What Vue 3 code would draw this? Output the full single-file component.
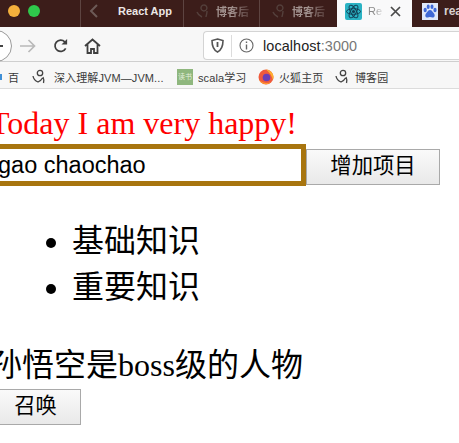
<script setup>
const tabs = [
  { id: 2, label: '博客后', cls: 'tab-blog' },
  { id: 3, label: '博客后', cls: 'tab-blog tab-blog2' }
]
const bookmarks = [
  { id: 1, label: '深入理解JVM—JVM...', icon: 'cnblog', labelGap: 8 },
  { id: 2, label: 'scala学习', icon: 'scala', labelGap: 5 },
  { id: 3, label: '火狐主页', icon: 'fox', labelGap: 5 },
  { id: 4, label: '博客园', icon: 'cnblog', labelGap: 6 }
]
const items = ['基础知识', '重要知识']
</script>

<template>
  <div class="shot">
    <header class="tabbar">
      <div class="lights">
        <span class="light yellow"></span>
        <span class="light green"></span>
      </div>
      <div class="tab tab-first">
        <svg class="chev" width="10" height="14" viewBox="0 0 10 14"><path d="M8 1 2 7l6 6" fill="none" stroke="#6d5a57" stroke-width="2"/></svg>
        <span class="tab-title strong">React App</span>
      </div>
      <div v-for="t in tabs" :key="t.id" class="tab" :class="t.cls">
        <svg class="blog-fav" width="14" height="14" viewBox="0 0 14 14"><path d="M1 8c1 3 3 4 5 5M8 1a3 3 0 1 1-.1 0M11 7c0 3-1 5-1 6" fill="none" stroke="#54403c" stroke-width="1.4"/></svg>
        <span class="tab-title fade">{{ t.label }}</span>
      </div>
      <div class="tab-active">
        <svg width="17" height="17" viewBox="0 0 17 17">
          <rect width="17" height="17" rx="2" fill="#2bb3c4"/>
          <g fill="none" stroke="#123f55" stroke-width="1">
            <ellipse cx="8.5" cy="8.5" rx="7" ry="2.8"/>
            <ellipse cx="8.5" cy="8.5" rx="7" ry="2.8" transform="rotate(60 8.5 8.5)"/>
            <ellipse cx="8.5" cy="8.5" rx="7" ry="2.8" transform="rotate(120 8.5 8.5)"/>
          </g>
          <circle cx="8.5" cy="8.5" r="1.6" fill="#123f55"/>
        </svg>
        <span class="active-title">Re</span>
        <svg class="close" width="11" height="11" viewBox="0 0 11 11"><path d="M1 1l9 9M10 1l-9 9" stroke="#4a4a4a" stroke-width="1.7"/></svg>
      </div>
      <div class="tab-last">
        <svg width="16" height="17" viewBox="0 0 16 17">
          <rect width="16" height="17" fill="#dfe8fa"/>
          <g fill="#3f68d6">
            <ellipse cx="3.2" cy="7" rx="1.6" ry="2.2"/>
            <ellipse cx="6.2" cy="3.8" rx="1.5" ry="2.2"/>
            <ellipse cx="10" cy="3.8" rx="1.5" ry="2.2"/>
            <ellipse cx="13" cy="7" rx="1.6" ry="2.2"/>
            <path d="M8 7c2 0 2.500 2 4 3.500 1.500 2 .500 4.500-2 4-1-.2-1.300-.4-2-.4s-1 .2-2 .4c-2.500.5-3.500-2-2-4C5.500 9 6 7 8 7z"/>
          </g>
        </svg>
        <span class="tab-title">rea</span>
      </div>
    </header>

    <nav class="toolbar">
      <div class="nav-icons">
        <span class="back"><i></i></span>
        <svg class="forward" width="16" height="14" viewBox="0 0 16 14"><path d="M0 7h14.500M8.500 1l6 6-6 6" fill="none" stroke="#b9b9b9" stroke-width="1.700"/></svg>
        <svg class="reload" width="16" height="16" viewBox="0 0 17 16"><path d="M13.500 10.500A6 6 0 1 1 12.500 3.600L14 5" fill="none" stroke="#3f3f3f" stroke-width="1.800"/><path d="M15 .5v6H9z" fill="#3f3f3f"/></svg>
        <svg class="home" width="17" height="16" viewBox="0 0 17 16"><path d="M1 8l7.500-6.500L16 8M3.500 6.500V15h3.500v-4h3v4h3.500V6.500" fill="none" stroke="#3f3f3f" stroke-width="1.800"/></svg>
      </div>
      <div class="urlbar">
        <svg class="shield" width="13" height="15" viewBox="0 0 13 15"><path d="M6.500 1 12 2.500c0 5-1.500 9.500-5.500 11.500C2.500 12 1 7.500 1 2.500z" fill="none" stroke="#555" stroke-width="1.600"/><path d="M6.500 4v5" stroke="#555" stroke-width="1.800"/></svg>
        <span class="divider"></span>
        <svg class="info" width="15" height="15" viewBox="0 0 15 15"><circle cx="7.500" cy="7.500" r="6.500" fill="none" stroke="#666" stroke-width="1.100"/><path d="M7.500 6.500v5M7.500 3.500v1.500" stroke="#666" stroke-width="1.400"/></svg>
        <span class="url">localhost<span class="port">:3000</span></span>
      </div>
    </nav>

    <div class="bookmarks">
      <span class="baidu-dot"></span>
      <span class="mark-first">百</span>
      <div v-for="b in bookmarks" :key="b.id" class="mark" :class="'mark-' + b.id">
        <svg v-if="b.icon === 'cnblog'" width="14" height="15" viewBox="0 0 14 15"><circle cx="8" cy="4" r="2.700" fill="none" stroke="#444" stroke-width="1.300"/><path d="M1 7c.5 3 2.500 5 5 6 2-1 3.500-2 4.500-4M11 8c1 2 1 4 .5 6" fill="none" stroke="#444" stroke-width="1.300"/></svg>
        <span v-else-if="b.icon === 'scala'" class="scala-icon">读书</span>
        <svg v-else width="16" height="16" viewBox="0 0 16 16"><circle cx="8" cy="8" r="7.500" fill="#ef5a3c"/><path d="M8 .5c4 .5 7.500 3.500 7.500 7.500 0 1-.2 2-.6 3C14 7 12 4 8 .5z" fill="#ffb02e"/><circle cx="8.500" cy="8.500" r="3.800" fill="#6a3fb5"/><path d="M1 11c2 4 8 6 12 2-4 2-8 1-12-2z" fill="#ff9a2e"/></svg>
        <span class="mark-label" :style="{ marginLeft: b.labelGap + 'px' }">{{ b.label }}</span>
      </div>
    </div>

    <main class="page">
      <div class="title">Today I am very happy!</div>
      <div class="form-row">
        <input class="field" value="gao chaochao" />
        <button class="btn add">增加项目</button>
      </div>
      <ul class="list">
        <li v-for="item in items" :key="item">{{ item }}</li>
      </ul>
      <p class="hero">孙悟空是boss级的人物</p>
      <button class="btn summon">召唤</button>
    </main>
  </div>
</template>

<style>
html, body { margin: 0; background: #fff; overflow: hidden; }
</style>

<style scoped>
.shot {
  width: 459px;
  height: 443px;
  overflow: hidden;
  background: #fff;
  font-family: "Liberation Sans", "Noto Sans CJK SC", sans-serif;
}
.tabbar {
  display: flex;
  height: 27px;
  background: #3c1d1a;
  overflow: hidden;
}
.lights {
  width: 81px;
  flex: none;
  display: flex;
  align-items: center;
  gap: 8px;
  padding-left: 8px;
  padding-bottom: 5px;
  box-sizing: border-box;
  border-right: 1px solid #5d4441;
}
.light { width: 12px; height: 12px; border-radius: 50%; }
.yellow { background: #f4b03c; }
.green { background: #2fc84b; }
.tab {
  display: flex;
  align-items: center;
  flex: none;
  box-sizing: border-box;
  padding-bottom: 5px;
  border-right: 1px solid #5d4441;
}
.tab-first { width: 103px; padding-left: 8px; }
.tab-blog { width: 76px; padding-left: 12px; }
.tab-blog2 { width: 77px; border-right: 0; }
.chev { margin-right: 19px; }
.tab-title {
  font-size: 11px;
  color: #b5a9a7;
  white-space: nowrap;
}
.strong { color: #ece7e6; font-weight: 700; }
.fade {
  color: #a39390;
  font-size: 11px;
  font-weight: 700;
  margin-left: 6px;
  -webkit-mask-image: linear-gradient(90deg, #000 45%, rgba(0, 0, 0, .25));
  mask-image: linear-gradient(90deg, #000 45%, rgba(0, 0, 0, .25));
}
.tab-active {
  width: 75px;
  flex: none;
  box-sizing: border-box;
  background: #f9f9fa;
  display: flex;
  align-items: center;
  padding: 0 0 5px 8px;
}
.active-title {
  font-size: 11px;
  color: #8a8a8a;
  margin-left: 6px;
  -webkit-mask-image: linear-gradient(90deg, #000 40%, rgba(0, 0, 0, .25));
  mask-image: linear-gradient(90deg, #000 40%, rgba(0, 0, 0, .25));
}
.close { margin-left: 8px; }
.tab-last {
  flex: 1;
  display: flex;
  align-items: center;
  gap: 6px;
  padding-left: 10px;
  padding-bottom: 5px;
}
.tab-last .tab-title { color: #d8d0cf; font-size: 12px; font-weight: 700; }
.toolbar {
  display: flex;
  align-items: center;
  height: 35px;
  padding-top: 3px;
  background: #f7f7f7;
  box-sizing: border-box;
  border-bottom: 1px solid #cfcfcf;
}
.nav-icons {
  width: 203px;
  flex: none;
  display: flex;
  align-items: center;
  height: 100%;
}
.back {
  width: 32px;
  height: 32px;
  flex: none;
  margin-left: -20px;
  box-sizing: border-box;
  border: 1px solid #9a9a9a;
  border-radius: 50%;
  background: #fff;
  display: flex;
  align-items: center;
  justify-content: flex-end;
  padding-right: 8px;
}
.back i { display: block; width: 4px; height: 2px; background: #444; }
.forward { margin-left: 8px; }
.reload { margin-left: 17px; }
.home { margin-left: 15px; }
.urlbar {
  flex: 1;
  height: 29px;
  box-sizing: border-box;
  background: #fff;
  border: 1px solid #d4d4d4;
  border-right: 0;
  border-radius: 4px 0 0 4px;
  display: flex;
  align-items: center;
  padding-left: 7px;
}
.divider { width: 1px; height: 22px; background: #dcdcdc; margin-left: 7px; }
.info { margin-left: 7px; }
.url { font-size: 14.400px; color: #222; margin-left: 9px; letter-spacing: .1px; }
.port { color: #777; }
.bookmarks {
  display: flex;
  align-items: center;
  height: 27px;
  padding-top: 3px;
  box-sizing: border-box;
  background: #f7f7f7;
  border-bottom: 1px solid #dcdcdc;
  color: #3a3a3a;
  font-size: 11px;
  white-space: nowrap;
  overflow: hidden;
}
.baidu-dot { width: 2px; height: 6px; background: #3f8fd6; flex: none; }
.mark-first { margin-left: 6px; font-size: 11px; width: 24px; flex: none; }
.mark { display: flex; align-items: center; flex: none; }
.mark-1 { width: 145px; }
.mark-2 { width: 81px; }
.mark-3 { width: 77px; }
.scala-icon {
  width: 16px;
  height: 16px;
  background: #8fb77e;
  color: #e4efdc;
  font-size: 7px;
  line-height: 16px;
  text-align: center;
  overflow: hidden;
}
.mark-label { font-size: 11px; letter-spacing: .1px; }
.page {
  margin-left: -10px;
  padding-top: 16px;
  font-family: "Liberation Serif", "Noto Sans CJK SC", serif;
  color: #000;
}
.title {
  color: #f00;
  font-size: 32px;
  line-height: 36px;
  white-space: nowrap;
}
.form-row {
  display: flex;
  align-items: flex-end;
  margin-top: 3px;
}
.field {
  width: 316px;
  height: 42px;
  flex: none;
  box-sizing: border-box;
  border: 5px solid #a8750f;
  padding: 0 3px;
  margin: 0;
  outline: none;
  background: #fff;
  color: #000;
  font-family: "Liberation Sans", sans-serif;
  font-size: 23.500px;
}
.btn {
  height: 36px;
  box-sizing: border-box;
  margin: 0;
  border: 1px solid #a9a9a9;
  background: linear-gradient(#fafafa, #e9e9e9);
  color: #000;
  font-family: "Liberation Sans", "Noto Sans CJK SC", sans-serif;
  font-size: 21.330px;
  padding: 0;
  line-height: 1;
}
.add { width: 134px; margin-bottom: 1px; }
.list {
  list-style: disc;
  margin: 32px 0 0;
  padding: 0 0 0 82px;
  font-size: 32px;
  line-height: 46px;
}
.hero {
  margin: 32px 0 0;
  font-size: 32px;
  line-height: 46px;
  white-space: nowrap;
}
.summon { display: block; width: 91px; margin-top: 1px; }
</style>
